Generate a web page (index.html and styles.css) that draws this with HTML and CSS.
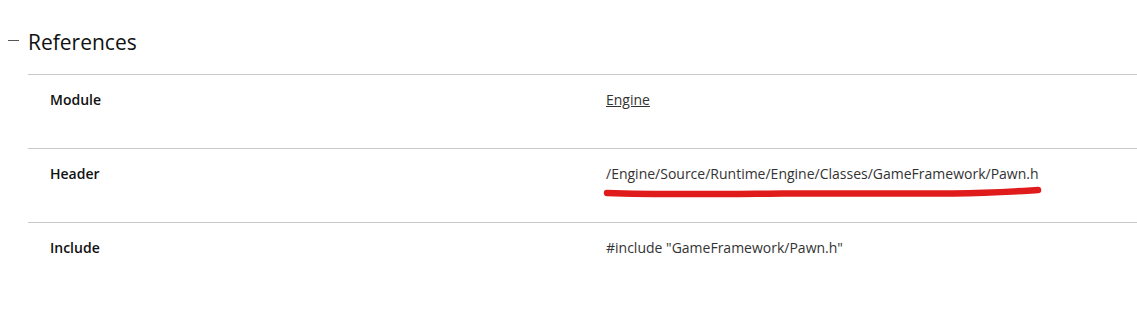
FILE: index.html
```html
<!DOCTYPE html>
<html lang="en">
<head>
  <meta charset="UTF-8" />
  <title>Pawn - References</title>
  <link rel="stylesheet" href="styles.css">
</head>
<body>
  <!-- References section -->
  <div class="section">
    <div class="section-head">
      <span class="collapse"></span>
      <h2>References</h2>
    </div>

    <div class="ref-table">
      <div class="ref-row">
        <div class="ref-label">Module</div>
        <div class="ref-value"><a href="#">Engine</a></div>
      </div>
      <div class="ref-row">
        <div class="ref-label">Header</div>
        <div class="ref-value">
          /Engine/Source/Runtime/Engine/Classes/GameFramework/Pawn.h
          <!-- hand-drawn highlight under the path -->
          <svg class="scribble" width="444" height="14" viewBox="0 0 444 14">
            <path d="M4 8 C60 10 120 9 180 8.5 C240 8 300 9 350 8.5 C390 8 418 6 435 5"
                  fill="none" stroke="#e01b1b" stroke-width="6.5" stroke-linecap="round"/>
          </svg>
        </div>
      </div>
      <div class="ref-row">
        <div class="ref-label">Include</div>
        <div class="ref-value">#include "GameFramework/Pawn.h"</div>
      </div>
    </div>
  </div>
</body>
</html>
```

FILE: styles.css
```css
body {
  margin: 0;
  font-family: "Open Sans", Arial, sans-serif;
  color: #222;
  background: white;
}

.section {
  padding: 26px 0 0 0;
}

.section-head {
  display: flex;
  align-items: center;
  height: 32px;
}

/* thin dash used as the collapse toggle */
.collapse {
  width: 11px;
  height: 0;
  border-top: 1px solid #555;
  margin: -3px 9px 0 8px;
}

.section-head h2 {
  margin: 0;
  font-size: 21px;
  font-weight: normal;
  color: #111;
}

.ref-table {
  margin: 16px 0 0 28px;
}

.ref-row {
  display: flex;
  border-top: 1px solid #c8c8c8;
  height: 58px;
  padding-top: 15px;
  box-sizing: content-box;
}

.ref-label {
  width: 578px;
  padding-left: 22px;
  box-sizing: border-box;
  font-size: 14px;
  font-weight: 600;
  line-height: 20px;
  color: #111;
}

.ref-value {
  font-size: 14px;
  line-height: 20px;
  color: #333;
  position: relative;
}

.ref-value a {
  color: #333;
  text-decoration: underline;
}

.scribble {
  position: absolute;
  left: -3px;
  top: 21px;
}
```
